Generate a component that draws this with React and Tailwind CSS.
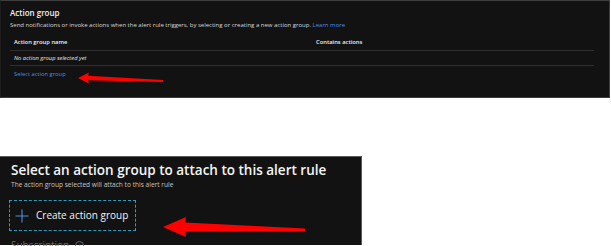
import React from 'react';

function Arrow({ className, tip, tail, headBack, headHalf, shaftNear, shaftFar }) {
  // tapered arrow pointing left, in a full-size overlay box
  const [tx, ty] = tip;
  const [ex, ey] = tail;
  const d = `M${tx} ${ty} L${headBack} ${ty - headHalf} L${headBack - 1} ${ty - shaftNear} L${ex} ${ey - shaftFar} L${ex} ${ey + shaftFar} L${headBack - 1} ${ty + shaftNear} L${headBack} ${ty + headHalf} Z`;
  return (
    <svg className={className} width="611" height="246" viewBox="0 0 611 246">
      <path d={d} fill="#ff0000" />
    </svg>
  );
}

export default function App() {
  return (
    <div className="relative w-[611px] h-[246px] bg-white overflow-hidden" style={{ fontFamily: '"Open Sans", "Noto Sans", sans-serif' }}>
      {/* top panel */}
      <div className="h-[98px] w-[610px] bg-[#121212] border border-[#3d3d3d] border-l-[#1c1c1c] px-[9px] pt-[6px]">
        <div className="text-[8px] font-semibold text-[#f2f2f2] leading-[12px]">Action group</div>
        <div className="mt-[2px] text-[6px] text-[#d6d6d6] leading-[9px] whitespace-nowrap">
          Send notifications or invoke actions when the alert rule triggers, by selecting or creating a new action group.{' '}
          <span className="text-[#4a8fe7]">Learn more</span>
        </div>
        <div className="mt-[4px] w-[584px]">
          <div className="flex h-[17px] items-center border-b border-[#2e2e2e] pl-[4px] text-[5.8px] font-semibold text-[#f0f0f0]">
            <div className="w-[302px]">Action group name</div>
            <div>Contains actions</div>
          </div>
          <div className="flex h-[15px] items-center border-b border-[#2e2e2e] pl-[4px] text-[5.8px] italic text-[#e8e8e8]">
            No action group selected yet
          </div>
          <div className="flex h-[17px] items-center pl-[4px] text-[5.8px] text-[#4a8fe7]">
            Select action group
          </div>
        </div>
      </div>

      {/* bottom panel */}
      <div className="mt-[58px] h-[89px] w-[362px] bg-[#121212] border-t border-r border-[#585858] pl-[11px] pt-[3px]">
        <div className="text-[13.5px] font-semibold text-[#f5f5f5] leading-[20px] whitespace-nowrap">
          Select an action group to attach to this alert rule
        </div>
        <div className="text-[6.6px] text-[#c4c4c4] leading-[9px] whitespace-nowrap">
          The action group selected will attach to this alert rule
        </div>
        <div className="mt-[11px] ml-[-2px] flex h-[31px] w-[127px] items-center gap-[7px] border border-dashed border-[#2a9fc0] pl-[5px]">
          <svg width="14" height="14" viewBox="0 0 14 14">
            <path d="M7 0.5V13.5M0.5 7H13.5" stroke="#4a90e2" strokeWidth="1.1" />
          </svg>
          <span className="text-[10px] text-[#f2f2f2] whitespace-nowrap">Create action group</span>
        </div>
        <div className="mt-[7px] flex items-center gap-[6px] text-[10px] text-[#6a6a6a] leading-[14px]">
          <span>Subscription</span>
          <span className="flex h-[9px] w-[9px] items-center justify-center rounded-full border border-[#6a6a6a] text-[6px]">i</span>
        </div>
      </div>

      <Arrow
        className="absolute left-0 top-0 pointer-events-none"
        tip={[78, 78]}
        tail={[163, 81]}
        headBack={89}
        headHalf={5.5}
        shaftNear={2.2}
        shaftFar={1}
      />
      <Arrow
        className="absolute left-0 top-0 pointer-events-none"
        tip={[163, 227]}
        tail={[305, 230]}
        headBack={186}
        headHalf={10}
        shaftNear={4.5}
        shaftFar={1.6}
      />
    </div>
  );
}
